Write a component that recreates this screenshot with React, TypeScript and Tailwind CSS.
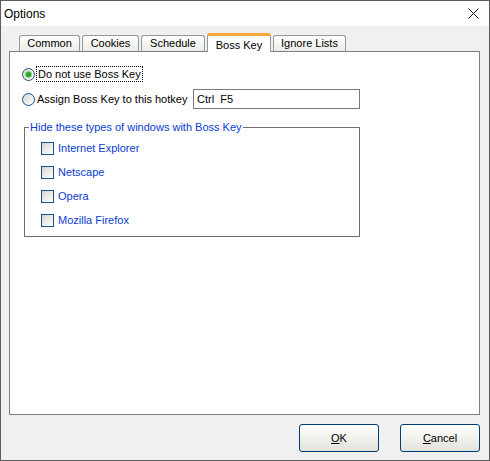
import React from "react";

const font = "font-['Liberation_Sans','DejaVu_Sans',Arial,sans-serif]";

function Tab({ label, width, selected }: { label: string; width: number; selected?: boolean }) {
  if (selected) {
    return (
      <div
        className="relative z-10 -mb-px flex h-[19px] items-start justify-center rounded-t-[3px] border-x border-t-[3px] border-x-[#919b9c] border-t-[#f5a73a] bg-white pt-[1px] text-[11px] text-black"
        style={{ width }}
      >
        {label}
      </div>
    );
  }
  return (
    <div
      className="flex h-[16px] items-center justify-center rounded-t-[3px] border border-b-0 border-[#919b9c] bg-gradient-to-b from-white to-[#ecebe5] text-[11px] text-black"
      style={{ width }}
    >
      {label}
    </div>
  );
}

function Radio({ checked }: { checked?: boolean }) {
  return (
    <span className="flex h-[13px] w-[13px] shrink-0 items-center justify-center rounded-full border border-[#1c5180] bg-gradient-to-br from-[#d6d6d0] to-white">
      {checked && <span className="h-[5px] w-[5px] rounded-full bg-[#2ca52c] ring-1 ring-[#7fd07f]" />}
    </span>
  );
}

function Check({ label }: { label: string }) {
  return (
    <div className="flex h-[13px] items-center gap-[4px]">
      <span className="h-[13px] w-[13px] shrink-0 border border-[#1c5180] bg-gradient-to-br from-[#d6d6d0] to-white" />
      <span className="text-[11px] leading-[13px] text-[#0a3cd2]">{label}</span>
    </div>
  );
}

export default function App() {
  const tabs = [
    { label: "Common", width: 61 },
    { label: "Cookies", width: 57 },
    { label: "Schedule", width: 64 },
  ];

  return (
    <div className={`${font} flex h-[461px] w-[490px] flex-col overflow-hidden border border-[#5c5c5c] bg-[#f0f0f0]`}>
      <div className="flex h-[25px] items-center justify-between bg-white pl-[3px] pr-[10px]">
        <span className="text-[12px] text-black">Options</span>
        <svg width="11" height="11" viewBox="0 0 11 11">
          <path d="M0.5 0.5 L10.5 10.5 M10.5 0.5 L0.5 10.5" stroke="#111" strokeWidth="1" />
        </svg>
      </div>

      <div className="flex flex-1 flex-col pt-[7px]">
        <div className="ml-[18px] flex h-[18px] items-end gap-[2px]">
          {tabs.map((t) => (
            <Tab key={t.label} label={t.label} width={t.width} />
          ))}
          <Tab label="Boss Key" width={64} selected />
          <Tab label="Ignore Lists" width={73} />
        </div>

        <div className="ml-[8px] h-[364px] w-[471px] border border-[#7b7f86] bg-white pl-[12px] pt-[14px]">
          <div className="flex h-[16px] items-center">
            <Radio checked />
            <span className="ml-[1px] border border-dotted border-black px-[1px] text-[11px] leading-[14px] text-black">
              Do not use Boss Key
            </span>
          </div>

          <div className="mt-[7px] flex h-[20px] items-center">
            <Radio />
            <span className="ml-[2px] w-[156px] text-[11px] text-black">Assign Boss Key to this hotkey</span>
            <div className="flex h-[20px] w-[167px] items-center border border-[#7a7a7a] bg-white pl-[3px] text-[11px] text-black">
              Ctrl&nbsp;&nbsp;F5
            </div>
          </div>

          <fieldset className="ml-[2px] mt-[12px] h-[116px] w-[336px] border border-[#6e6e6e]">
            <legend className="ml-[4px] px-[1px] text-[11px] leading-[13px] text-[#0a3cd2]">
              Hide these types of windows with Boss Key
            </legend>
            <div className="flex flex-col gap-[11px] pl-[16px] pt-[8px]">
              <Check label="Internet Explorer" />
              <Check label="Netscape" />
              <Check label="Opera" />
              <Check label="Mozilla Firefox" />
            </div>
          </fieldset>
        </div>

        <div className="mt-[9px] flex justify-end gap-[21px] pr-[9px]">
          <button className="h-[28px] w-[80px] rounded-[3px] border border-[#003c74] bg-gradient-to-b from-white to-[#e3e3db] text-[11px] text-black">
            <span className="underline">O</span>K
          </button>
          <button className="h-[28px] w-[80px] rounded-[3px] border border-[#003c74] bg-gradient-to-b from-white to-[#e3e3db] text-[11px] text-black">
            <span className="underline">C</span>ancel
          </button>
        </div>
      </div>
    </div>
  );
}
